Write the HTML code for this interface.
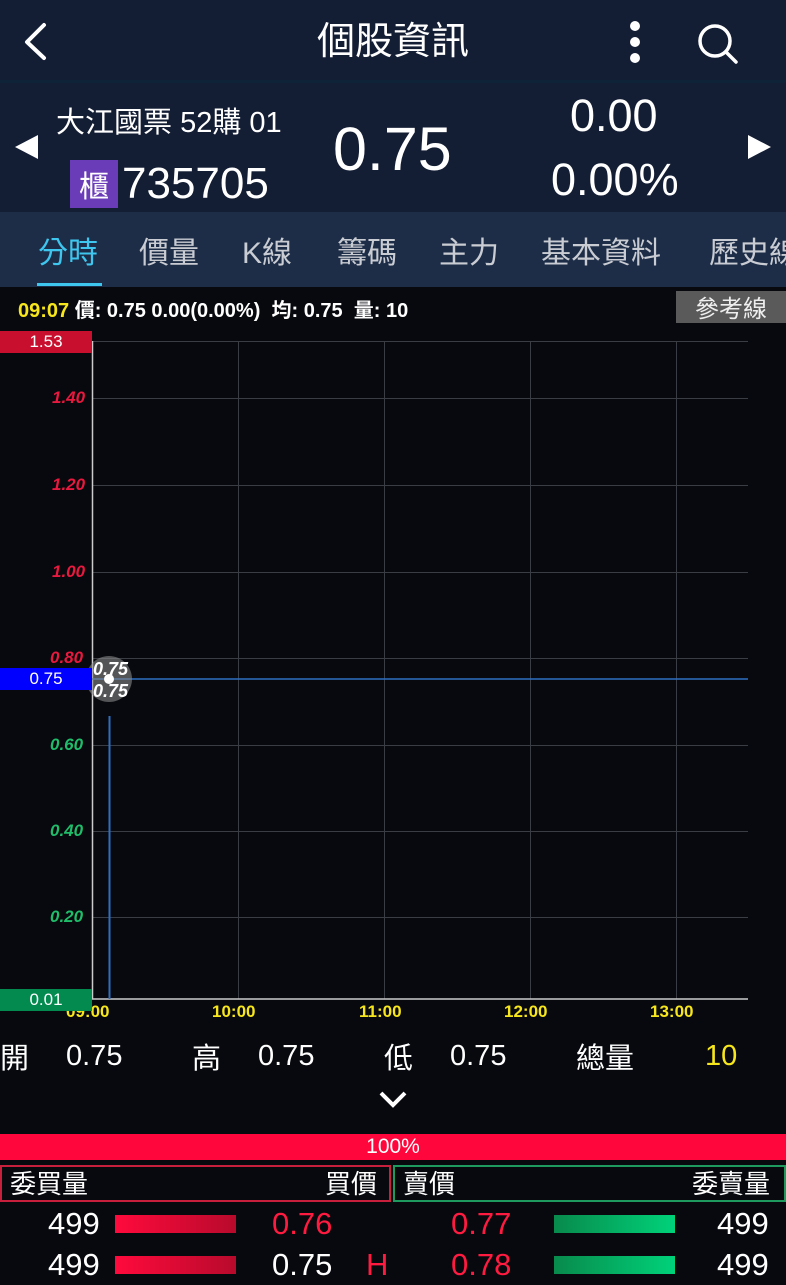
<!DOCTYPE html>
<html><head><meta charset="utf-8"><style>
*{margin:0;padding:0;box-sizing:border-box}
body{width:786px;height:1280px;background:#07090e;font-family:"Liberation Sans","Noto Sans CJK TC",sans-serif;color:#fff;position:relative;overflow:hidden}
.a{position:absolute;white-space:nowrap}
.cjk{font-family:"Noto Sans CJK TC",sans-serif}
.yl{color:#f7e61b;font-weight:bold;font-size:17px}
.axr{color:#e8183e;font-style:italic;font-weight:bold;font-size:17px}
.axg{color:#1fbd6a;font-style:italic;font-weight:bold;font-size:17px}
</style></head><body>
<div class="a" style="left:0;top:0;width:786px;height:80px;background:#131d33"></div>
<div class="a" style="left:0;top:80px;width:786px;height:3px;background:#0e2238"></div>
<div class="a" style="left:0;top:83px;width:786px;height:129px;background:#131d33"></div>
<div class="a" style="left:0;top:212px;width:786px;height:75px;background:#1d2d47"></div>
<svg class="a" style="left:0;top:0" width="786" height="80">
<path d="M44 25 L27 42 L44 58" stroke="#fff" stroke-width="4" fill="none" stroke-linecap="round" stroke-linejoin="round"/>
<circle cx="635" cy="26" r="5" fill="#fff"/><circle cx="635" cy="42" r="5" fill="#fff"/><circle cx="635" cy="58" r="5" fill="#fff"/>
<circle cx="715" cy="41" r="15" stroke="#fff" stroke-width="3.5" fill="none"/><path d="M726 52 L736 62" stroke="#fff" stroke-width="3.5" stroke-linecap="round"/>
</svg>
<div class="a cjk" style="left:0;width:786px;text-align:center;top:13px;font-size:38px;line-height:50px">個股資訊</div>
<svg class="a" style="left:0;top:80px" width="786" height="132">
<path d="M15 67 L38 55 L38 79 Z" fill="#fff"/><path d="M771 67 L748 55 L748 79 Z" fill="#fff"/>
</svg>
<div class="a cjk" style="left:56px;top:100px;font-size:29px;line-height:40px">大江國票<span style="font-family:'Liberation Sans'"> 52</span>購<span style="font-family:'Liberation Sans'"> 01</span></div>
<div class="a cjk" style="left:70px;top:160px;width:48px;height:48px;background:#6a3cb8;font-size:30px;line-height:48px;text-align:center">櫃</div>
<div class="a" style="left:122px;top:160px;font-size:44px;line-height:48px">735705</div>
<div class="a" style="left:333px;top:116px;font-size:61px;line-height:66px">0.75</div>
<div class="a" style="left:570px;top:92px;font-size:45px;line-height:48px">0.00</div>
<div class="a" style="left:551px;top:156px;font-size:45px;line-height:48px">0.00%</div>
<div class="a cjk" style="left:38px;top:228px;font-size:30px;line-height:44px;color:#3ec6ee">分時</div>
<div class="a cjk" style="left:139px;top:228px;font-size:30px;line-height:44px;color:#c9ccd3">價量</div>
<div class="a cjk" style="left:242px;top:228px;font-size:30px;line-height:44px;color:#c9ccd3"><span style="font-family:'Liberation Sans'">K</span>線</div>
<div class="a cjk" style="left:337px;top:228px;font-size:30px;line-height:44px;color:#c9ccd3">籌碼</div>
<div class="a cjk" style="left:439px;top:228px;font-size:30px;line-height:44px;color:#c9ccd3">主力</div>
<div class="a cjk" style="left:541px;top:228px;font-size:30px;line-height:44px;color:#c9ccd3">基本資料</div>
<div class="a cjk" style="left:709px;top:228px;font-size:30px;line-height:44px;color:#c9ccd3">歷史線</div>
<div class="a" style="left:37px;top:283px;width:65px;height:3px;background:#3ec6ee"></div>
<div class="a" style="left:18px;top:296px;font-size:20px;line-height:26px;font-weight:bold"><span style="color:#f7e61b">09:07</span>&nbsp;<span class="cjk">價</span>: 0.75 0.00(0.00%)&nbsp; <span class="cjk">均</span>: 0.75&nbsp; <span class="cjk">量</span>: 10</div>
<div class="a cjk" style="left:676px;top:291px;width:110px;height:32px;background:#5a5a5a;font-size:24px;line-height:32px;text-align:center;color:#eee">參考線</div>
<svg class="a" style="left:0;top:330px" width="786" height="690">
<g stroke="#3a3d44" stroke-width="1">
<line x1="92" y1="11.5" x2="748" y2="11.5"/><line x1="92" y1="68.5" x2="748" y2="68.5"/><line x1="92" y1="155.5" x2="748" y2="155.5"/><line x1="92" y1="242.5" x2="748" y2="242.5"/><line x1="92" y1="328.5" x2="748" y2="328.5"/><line x1="92" y1="415.5" x2="748" y2="415.5"/><line x1="92" y1="501.5" x2="748" y2="501.5"/><line x1="92" y1="587.5" x2="748" y2="587.5"/>
<line x1="238.5" y1="11" x2="238.5" y2="669"/><line x1="384.5" y1="11" x2="384.5" y2="669"/><line x1="530.5" y1="11" x2="530.5" y2="669"/><line x1="676.5" y1="11" x2="676.5" y2="669"/>
</g>
<line x1="92.5" y1="11" x2="92.5" y2="669" stroke="#ccc" stroke-width="1.5"/>
<line x1="92" y1="669" x2="748" y2="669" stroke="#ccc" stroke-width="1.5"/>
<line x1="92" y1="349" x2="748" y2="349" stroke="#2f6fc0" stroke-width="1.5"/>
<line x1="109.5" y1="386" x2="109.5" y2="669" stroke="#2f6fc0" stroke-width="2"/>
<circle cx="109" cy="349" r="23" fill="#888" fill-opacity="0.6"/>
<circle cx="109" cy="349" r="5" fill="#fff"/>
</svg>
<div class="a" style="left:0;top:331px;width:92px;height:22px;background:#c8102e;font-size:17px;line-height:22px;text-align:center">1.53</div>
<div class="a axr" style="left:52px;top:388px">1.40</div>
<div class="a axr" style="left:52px;top:475px">1.20</div>
<div class="a axr" style="left:52px;top:562px">1.00</div>
<div class="a axr" style="left:50px;top:648px">0.80</div>
<div class="a" style="left:0;top:668px;width:92px;height:22px;background:#0000ff;font-size:17px;line-height:22px;text-align:center">0.75</div>
<div class="a" style="left:93px;top:659px;font-size:18px;font-style:italic;font-weight:bold">0.75</div>
<div class="a" style="left:93px;top:681px;font-size:18px;font-style:italic;font-weight:bold">0.75</div>
<div class="a axg" style="left:50px;top:735px">0.60</div>
<div class="a axg" style="left:50px;top:821px">0.40</div>
<div class="a axg" style="left:50px;top:907px">0.20</div>
<div class="a yl" style="left:66px;top:1002px">09:00</div>
<div class="a" style="left:0;top:989px;width:92px;height:22px;background:#028a4f;font-size:17px;line-height:22px;text-align:center">0.01</div>
<div class="a yl" style="left:212px;top:1002px">10:00</div>
<div class="a yl" style="left:359px;top:1002px">11:00</div>
<div class="a yl" style="left:504px;top:1002px">12:00</div>
<div class="a yl" style="left:650px;top:1002px">13:00</div>
<div class="a" style="top:1038px;font-size:29px;line-height:36px;left:0;width:786px">
<span class="a cjk" style="left:0">開</span><span class="a" style="left:66px">0.75</span>
<span class="a cjk" style="left:192px">高</span><span class="a" style="left:258px">0.75</span>
<span class="a cjk" style="left:384px">低</span><span class="a" style="left:450px">0.75</span>
<span class="a cjk" style="left:576px">總量</span><span class="a" style="left:705px;color:#f7e61b">10</span>
</div>
<svg class="a" style="left:378px;top:1090px" width="30" height="20"><path d="M3 3 L15 15 L27 3" stroke="#fff" stroke-width="4" fill="none"/></svg>
<div class="a" style="left:0;top:1134px;width:786px;height:26px;background:#ff073c;font-size:21px;line-height:26px;text-align:center">100%</div>
<div class="a" style="left:0;top:1165px;width:391px;height:37px;border:2px solid #c8203c"></div>
<div class="a" style="left:393px;top:1165px;width:393px;height:37px;border:2px solid #1f9a5e"></div>
<div class="a cjk" style="left:10px;top:1166px;font-size:26px;line-height:34px">委買量</div>
<div class="a cjk" style="left:325px;top:1166px;font-size:26px;line-height:34px">買價</div>
<div class="a cjk" style="left:403px;top:1166px;font-size:26px;line-height:34px">賣價</div>
<div class="a cjk" style="left:692px;top:1166px;font-size:26px;line-height:34px">委賣量</div>
<div class="a" style="top:1205px;font-size:31px;line-height:38px;left:0;width:786px;height:80px">
<span class="a" style="left:48px">499</span>
<span class="a" style="left:115px;top:10px;width:121px;height:18px;background:linear-gradient(90deg,#ff0a3c,#b80a2c)"></span>
<span class="a" style="left:272px;color:#ff1a40">0.76</span>
<span class="a" style="left:451px;color:#ff1a40">0.77</span>
<span class="a" style="left:554px;top:10px;width:121px;height:18px;background:linear-gradient(90deg,#088a4c,#00d27a)"></span>
<span class="a" style="left:717px">499</span>
<span class="a" style="left:48px;top:41px">499</span>
<span class="a" style="left:115px;top:51px;width:121px;height:18px;background:linear-gradient(90deg,#ff0a3c,#b80a2c)"></span>
<span class="a" style="left:272px;top:41px">0.75</span>
<span class="a" style="left:366px;top:41px;color:#ff1a40">H</span>
<span class="a" style="left:451px;top:41px;color:#ff1a40">0.78</span>
<span class="a" style="left:554px;top:51px;width:121px;height:18px;background:linear-gradient(90deg,#088a4c,#00d27a)"></span>
<span class="a" style="left:717px;top:41px">499</span>
</div>
</body></html>
